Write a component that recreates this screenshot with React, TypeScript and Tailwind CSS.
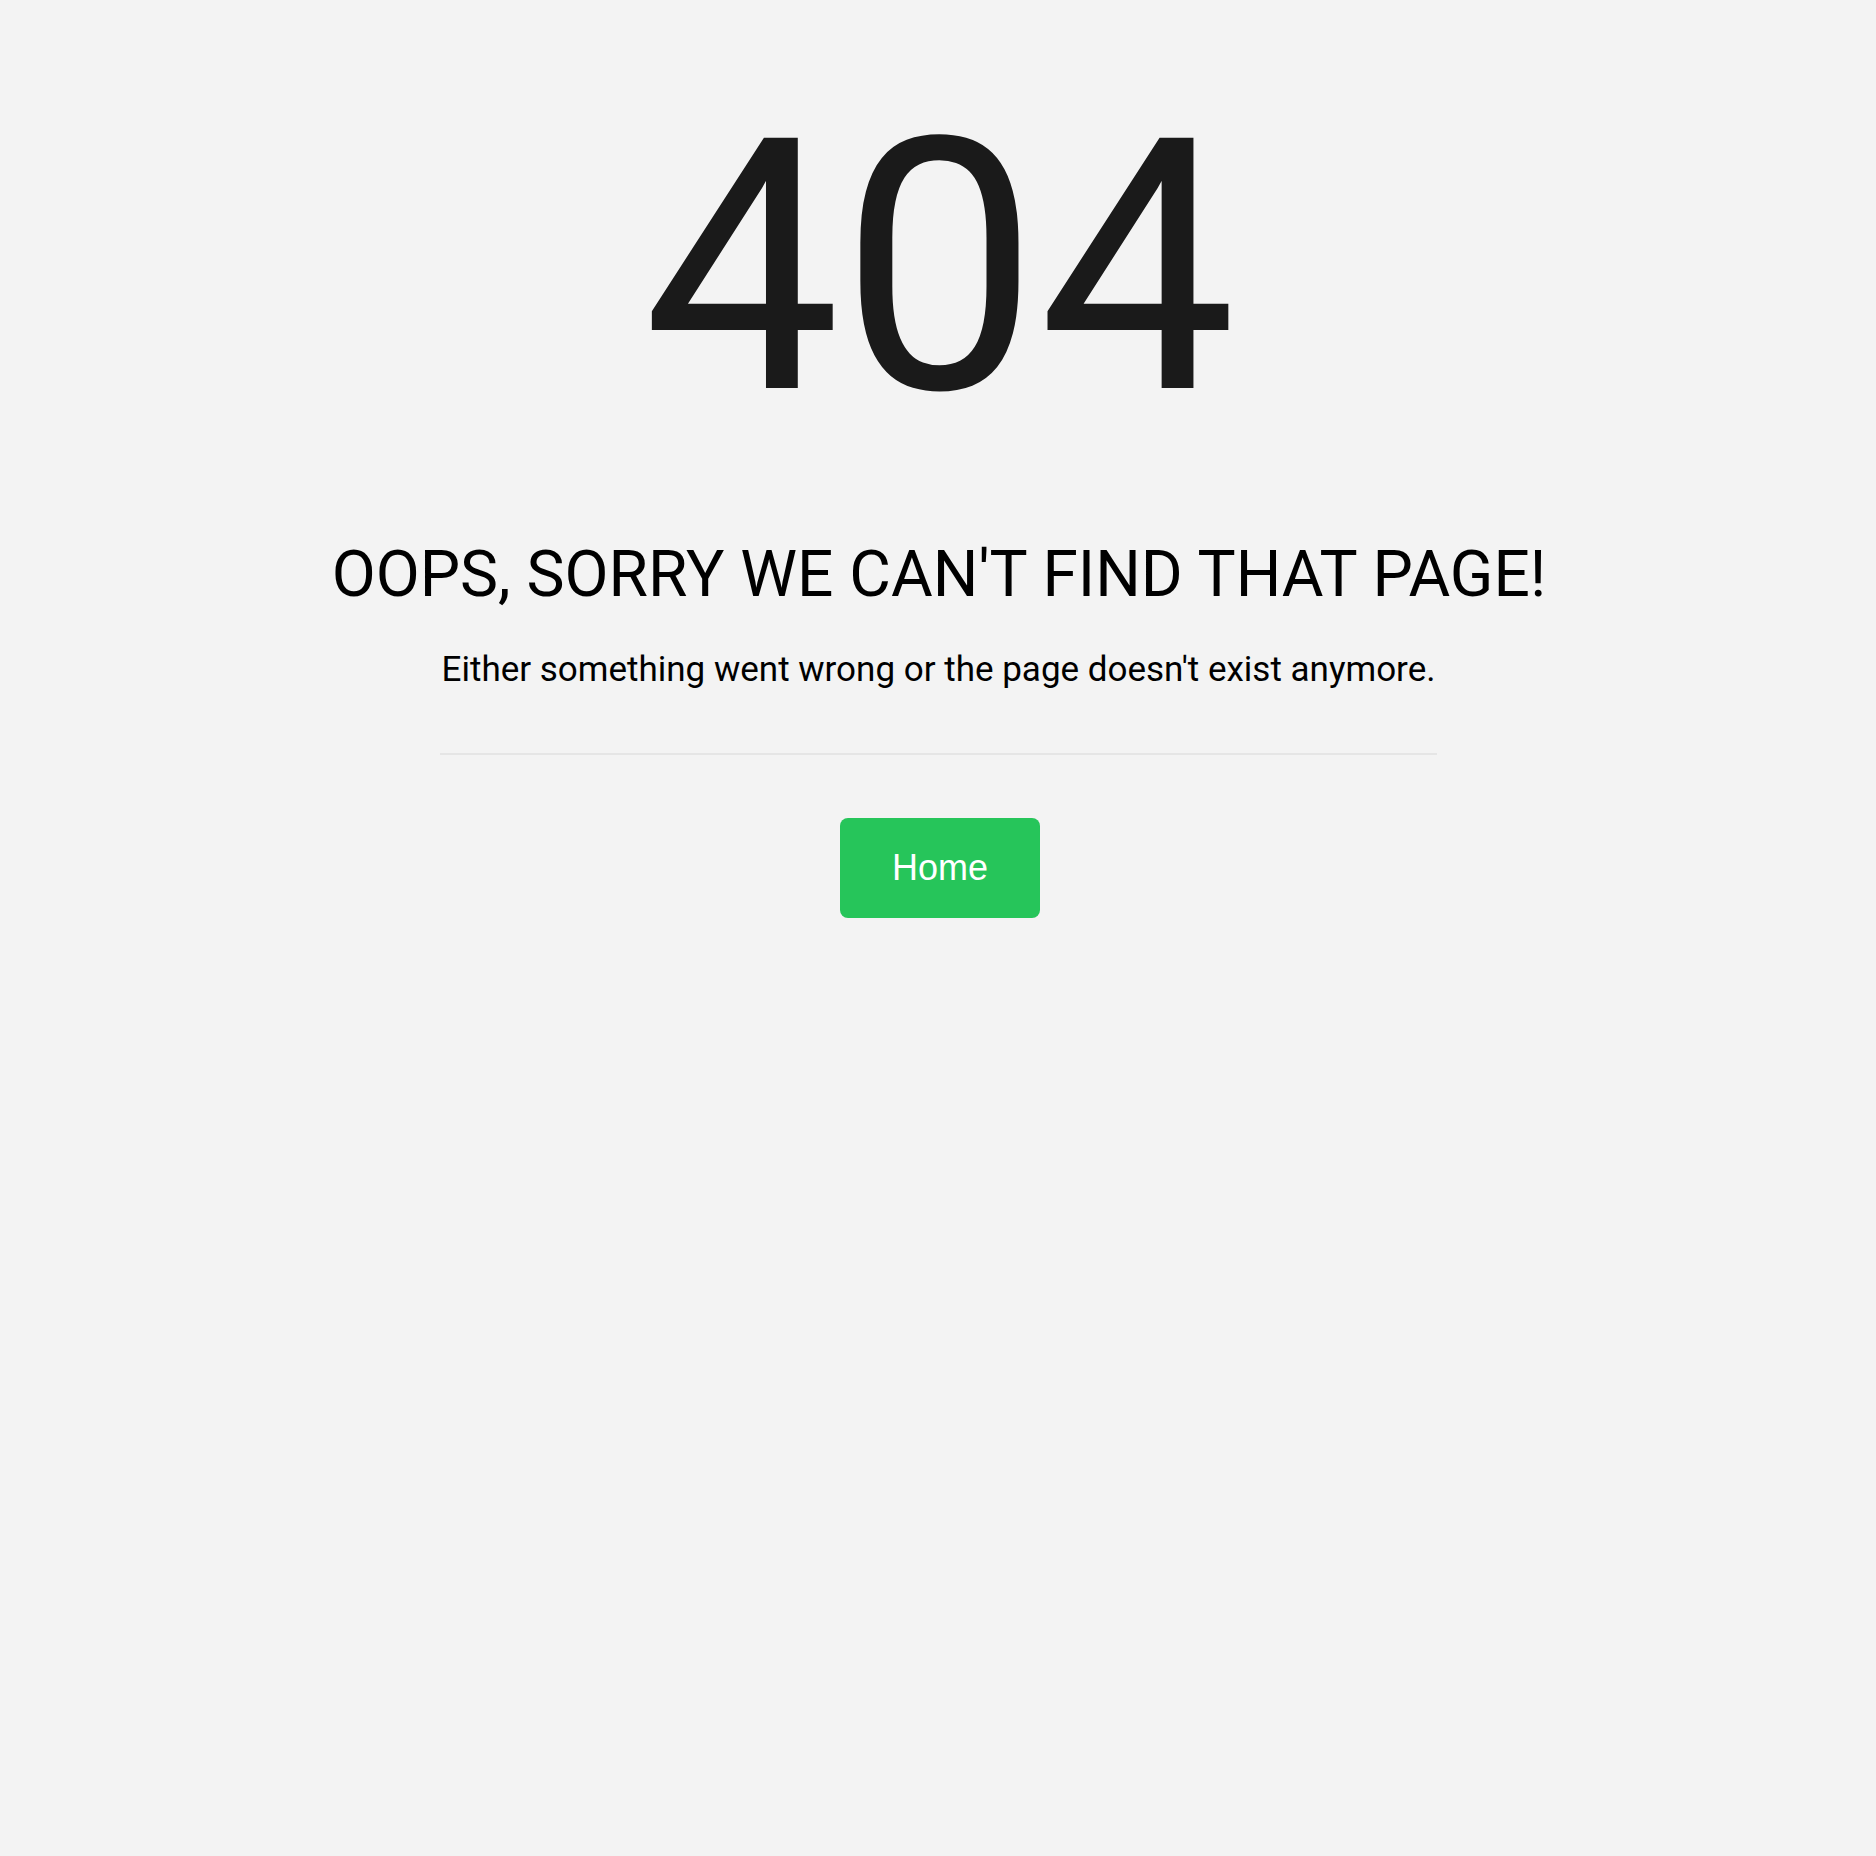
export default function App() {
  return (
    <div
      className="min-h-screen w-full bg-[#f3f3f3] flex flex-col items-center pt-[92px]"
      style={{ fontFamily: "Roboto, 'Liberation Sans', sans-serif" }}
    >
      {/* big status code */}
      <h1 className="text-[352px] leading-none font-normal text-[#1a1a1a] pl-[3px]">404</h1>

      <h2 className="mt-[99px] text-[64px] leading-none font-normal text-black whitespace-nowrap pl-[2px]">
        OOPS, SORRY WE CAN'T FIND THAT PAGE!
      </h2>

      <div className="w-[998px] flex flex-col items-center pl-[1px]">
        <p className="mt-[45px] text-[35px] leading-none text-black whitespace-nowrap">
          Either something went wrong or the page doesn't exist anymore.
        </p>
        <hr className="mt-[66px] w-full border-0 h-[2px] bg-[#e5e5e5]" />
      </div>

      <button
        type="button"
        className="mt-[63px] ml-[4px] w-[200px] h-[100px] rounded-lg bg-[#26c55a] flex items-center justify-center text-white text-[36px] font-['Liberation_Sans',Arial,sans-serif]"
      >
        Home
      </button>
    </div>
  );
}
